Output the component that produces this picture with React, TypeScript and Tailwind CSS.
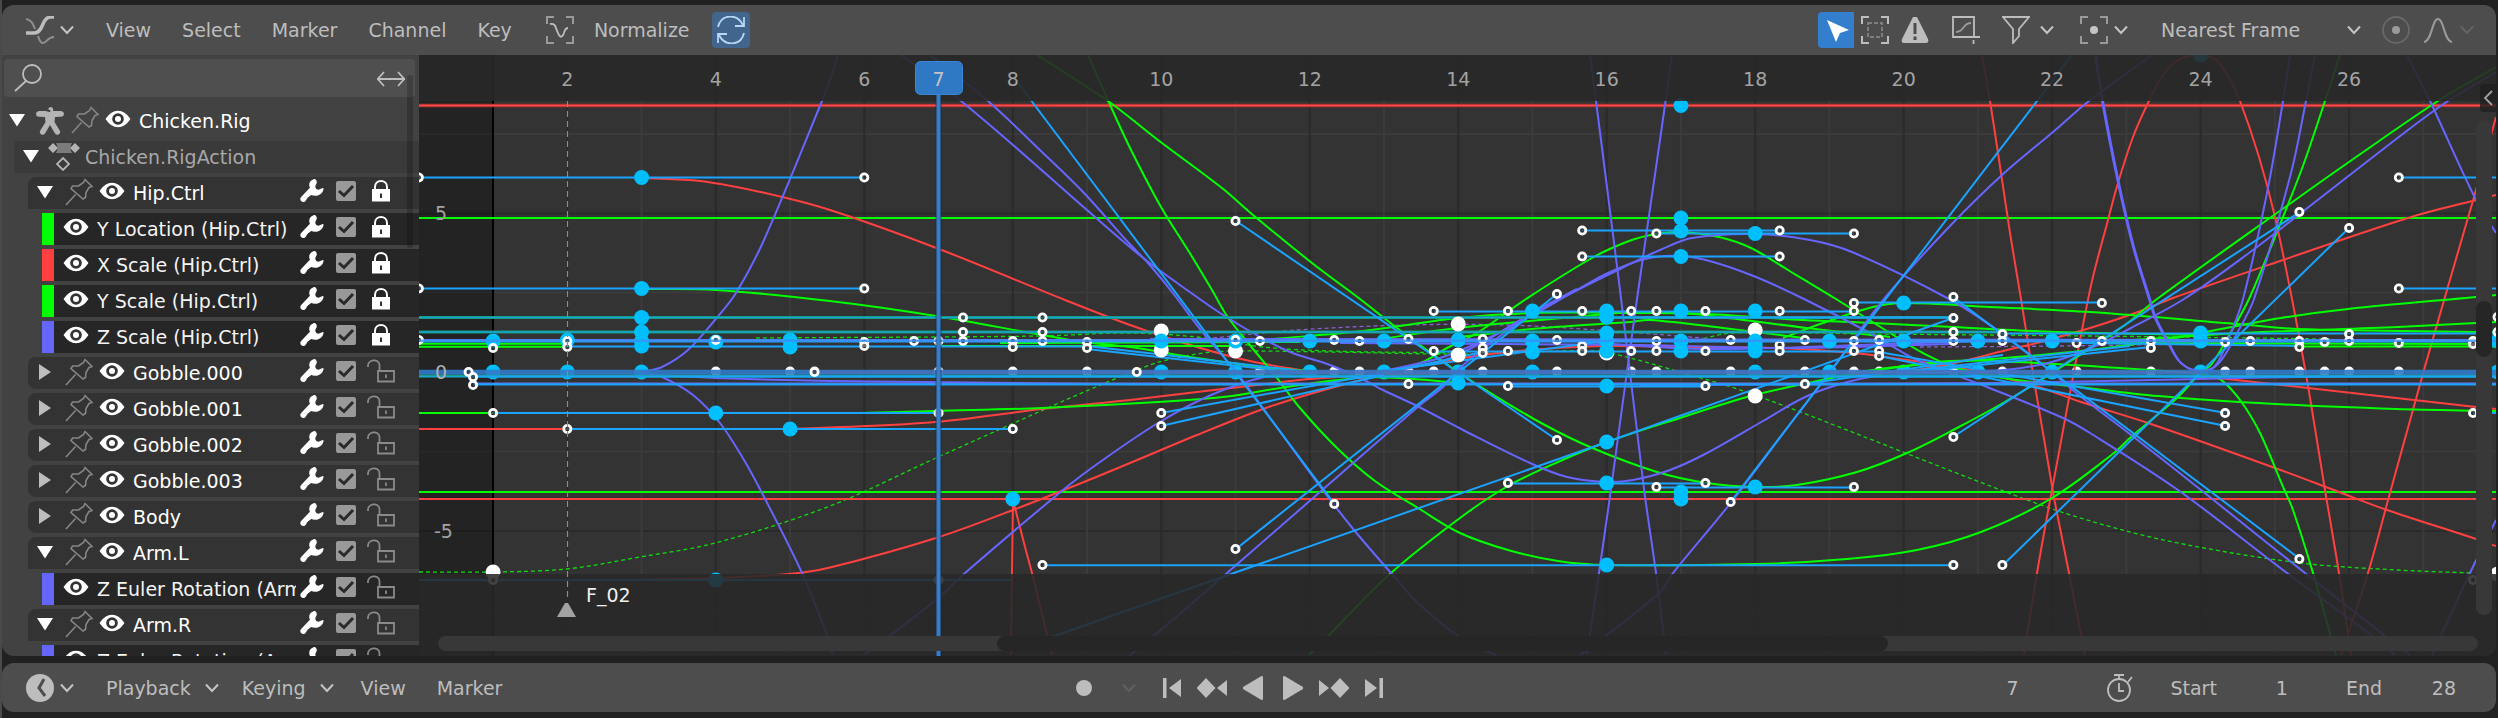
import React, { useState } from "react";

type Point = [number, number];

/* ---------- icons ---------- */

function Chevron({ className = "text-[#c4c4c4]" }: { className?: string }) {
  return (
    <svg viewBox="0 0 14 10" className={`h-[10px] w-[14px] shrink-0 ${className}`} fill="none" stroke="currentColor" strokeWidth="2">
      <path d="M1 1.5 7 8l6-6.5" />
    </svg>
  );
}

function Glyph({ children, className = "size-7" }: { children: React.ReactNode; className?: string }) {
  return (
    <svg viewBox="0 0 28 28" className={`shrink-0 ${className}`} fill="none" stroke="currentColor" strokeWidth="2">
      {children}
    </svg>
  );
}

function Corners() {
  return <path d="M1 8V1h7M20 1h7v7M27 20v7h-7M8 27H1v-7" />;
}

function GraphEditorIcon() {
  return (
    <Glyph>
      <path d="M0 17h8c5 0 7-4 9-9s4-7 8-7h3" strokeWidth="3.400" />
      <path d="M0 3c6 1 7 5 9 10M12 20c1 3 2 7 5 7 4 0 4-6 11-6" stroke="#8f8f8f" />
    </Glyph>
  );
}

function Eye() {
  return (
    <svg viewBox="0 0 26 18" className="h-[18px] w-[26px]" fill="none">
      <path d="M1.500 9C5.500 3 9.500 1.500 13 1.500S20.500 3 24.500 9C20.500 15 16.500 16.500 13 16.500S5.500 15 1.500 9Z" fill="#fff" stroke="#fff" strokeWidth="1.500" />
      <circle cx="13" cy="9" r="5.800" fill="#333" />
      <circle cx="13" cy="9" r="3" fill="#fff" />
    </svg>
  );
}

function Pin() {
  return (
    <Glyph className="size-7 text-[#858585]">
      <path d="M20 1.500 27 8.500 24 9.500 21 14.500 20.500 19.500 18 21 6 10.500 7.500 8 13.500 8 18.500 4.500ZM10.500 16.500 1 27" strokeWidth="1.600" />
    </Glyph>
  );
}

function Wrench() {
  return (
    <svg viewBox="0 0 24 24" className="size-6" fill="#fff">
      <path d="M13.500.2c-4 1.300-5.200 5.200-3.600 8.600L.9 18.200c-1.700 2.500.4 5.600 3.400 4.700 2-.8 2.200-3.400 3.900-4.600l3-2.200c4.800 1.700 10.600.2 12.200-5.400.7-2.100-.7-2.200-2-1.200-1.500 1-3.100 1.700-4.600.8-1.600-1.100-2-3.100-.8-4.800.7-1.100 1.200-2 .5-3.500-.4-1.500-1.500-2.200-3-1.800Z" />
    </svg>
  );
}

function Lock({ locked }: { locked: boolean }) {
  return locked ? (
    <svg viewBox="0 0 28 24" className="h-6 w-7" fill="none">
      <path d="M8 11V8c0-8 12-8 12 0v3" stroke="#fff" strokeWidth="2" />
      <path d="M5 10h18v12.500H5z" fill="#fff" />
      <path d="M13 14.500h2v4.500h-2z" fill="#333" />
    </svg>
  ) : (
    <svg viewBox="0 0 28 24" className="h-6 w-7" fill="none" stroke="#8a8a8a" strokeWidth="1.800">
      <path d="M1 8C0 0 12-1 12.500 6v5M11 12h16v10.500H11zM19 15.500v3.500" />
    </svg>
  );
}

function Armature() {
  return (
    <svg viewBox="0 0 28 28" className="size-7 shrink-0" fill="#b4b4b4">
      <path d="M14 0c3 0 3.500 2 3 4h7.500C29 4 29 9.500 25 9.800L19 10l-.5 5L24 24c1 3.500-3 5-5 2.500L14 18l-5 8.500C7 29 3 27.500 4 24l5.500-9L9 10l-6-.2C-1 9.500-1 4 3.500 4H10c1 0 3 2 5 0l-3-2Z" />
    </svg>
  );
}

function ActionIcon() {
  return (
    <svg viewBox="0 0 32 28" className="h-7 w-8 shrink-0">
      <path d="M8 0h16c-2 3-2 7 0 10H8c2-3 2-7 0-10Z" fill="#7c7c7c" />
      <path d="M5 0l5 5-5 5-5-5ZM27 0l5 5-5 5-5-5Z" fill="#b4b4b4" />
      <path d="M15 15l6 6-6 6-6-6Z" fill="none" stroke="#b4b4b4" strokeWidth="1.800" />
    </svg>
  );
}

function Disclosure({ open }: { open: boolean }) {
  return (
    <svg viewBox="0 0 16 16" className="size-4">
      {open ? <path d="M0 2h16L8 14.500Z" fill="#fff" /> : <path d="M2 0 14 8 2 16Z" fill="#bdbdbd" />}
    </svg>
  );
}

/* ---------- channel list ---------- */

function RowTools({ locked, name }: { locked: boolean; name: string }) {
  const [isLocked, setLocked] = useState(locked);
  return (
    <div className="mr-6 -mt-1 flex shrink-0 items-center">
      <button aria-label={`Modifiers of ${name}`} className="mr-3"><Wrench /></button>
      <label className="mr-[11px] grid size-5">
        <input type="checkbox" defaultChecked aria-label={`Enable ${name}`} className="peer size-5 appearance-none rounded-[2px] bg-[#999] [grid-area:1/1]" />
        <svg viewBox="0 0 20 20" className="pointer-events-none hidden size-5 [grid-area:1/1] peer-checked:block" fill="none" stroke="#2a2a2a" strokeWidth="3">
          <path d="M3 10l5 4.500L17 5" />
        </svg>
      </label>
      <button aria-label={`Lock ${name}`} onClick={() => setLocked(!isLocked)}><Lock locked={isLocked} /></button>
    </div>
  );
}

function GroupRow({ name, open = false, locked = false }: { name: string; open?: boolean; locked?: boolean }) {
  return (
    <li className={`ml-[26px] flex h-8 shrink-0 items-center bg-[#333] pl-[9px] ${open ? "rounded-tl-lg" : "rounded-l-lg"}`}>
      <button aria-label={`Expand ${name}`} className="mr-3 -mt-0.5"><Disclosure open={open} /></button>
      <button aria-label={`Pin ${name}`} className="mr-1.5 -mt-0.5"><Pin /></button>
      <button aria-label={`Show ${name}`} className="mr-2 -mt-1"><Eye /></button>
      <span className="min-w-0 flex-1 overflow-hidden whitespace-nowrap text-white">{name}</span>
      <RowTools locked={locked} name={name} />
    </li>
  );
}

function CurveRow({ name, stripe, locked = true }: { name: string; stripe: string; locked?: boolean }) {
  return (
    <li className="ml-10 flex h-8 shrink-0 items-center bg-[#262626]">
      <span className={`mr-[9px] h-8 w-3 shrink-0 ${stripe}`} />
      <button aria-label={`Show ${name}`} className="mr-2 -mt-1 shrink-0"><Eye /></button>
      <span className="mr-1 min-w-0 flex-1 overflow-hidden whitespace-nowrap text-[#f4f4f4]">{name}</span>
      <RowTools locked={locked} name={name} />
    </li>
  );
}

function ChannelList() {
  return (
    <aside className="relative flex w-[417px] shrink-0 flex-col overflow-hidden rounded-bl-xl bg-[#424242]">
      <label className="mt-1 mr-1 ml-[2px] flex h-[38px] shrink-0 items-center rounded bg-[#4f4f4f] pr-[10px] pl-[10px] text-[#bdbdbd]">
        <Glyph><circle cx="18" cy="10" r="9" strokeWidth="1.800" /><path d="M12 17 1 27" strokeWidth="1.800" /></Glyph>
        <input type="search" aria-label="Filter channels" className="min-w-0 flex-1 bg-transparent px-2 outline-none" />
        <Glyph><path d="M0 15h28M7 8 .8 15 7 22M21 8l6.200 7L21 22" strokeWidth="1.800" /></Glyph>
      </label>
      <ul className="mt-2 flex flex-col gap-1">
        <li className="flex h-8 shrink-0 items-center pl-[7px]">
          <button aria-label="Collapse Chicken.Rig" className="mr-[11px] -mt-0.5"><Disclosure open /></button>
          <Armature />
          <button aria-label="Pin Chicken.Rig" className="mr-1.5 ml-[7px] -mt-0.5"><Pin /></button>
          <button aria-label="Show Chicken.Rig" className="mr-2 -mt-1"><Eye /></button>
          <span className="text-white">Chicken.Rig</span>
        </li>
        <li className="ml-3 flex h-8 shrink-0 items-center bg-[#3a3a3a] pl-[9px]">
          <button aria-label="Collapse Chicken.RigAction" className="mr-[9px] -mt-0.5"><Disclosure open /></button>
          <ActionIcon />
          <span className="ml-[5px] text-[#a8a8a8]">Chicken.RigAction</span>
        </li>
        <GroupRow name="Hip.Ctrl" open locked />
        <CurveRow name="Y Location (Hip.Ctrl)" stripe="bg-[#00ff00]" />
        <CurveRow name="X Scale (Hip.Ctrl)" stripe="bg-[#ff4040]" />
        <CurveRow name="Y Scale (Hip.Ctrl)" stripe="bg-[#00ff00]" />
        <CurveRow name="Z Scale (Hip.Ctrl)" stripe="bg-[#6666ff]" />
        <GroupRow name="Gobble.000" />
        <GroupRow name="Gobble.001" />
        <GroupRow name="Gobble.002" />
        <GroupRow name="Gobble.003" />
        <GroupRow name="Body" />
        <GroupRow name="Arm.L" open />
        <CurveRow name="Z Euler Rotation (Arm.L)" stripe="bg-[#6666ff]" locked={false} />
        <GroupRow name="Arm.R" open />
        <CurveRow name="Z Euler Rotation (Arm.R)" stripe="bg-[#6666ff]" locked={false} />
      </ul>
      <span className="absolute top-5 right-1.5 h-[173px] w-1.5 rounded-full bg-black/20" />
    </aside>
  );
}

/* ---------- graph ---------- */

const frameX = (f: number) => 1606.7 + (f - 16) * 74.24;

/* Smooth path whose tangents are scaled by segment length, so uneven spacing does not overshoot. */
function smooth(points: Point[]): string {
  const dir = points.map((_, i) => {
    const a = points[Math.max(0, i - 1)];
    const b = points[Math.min(points.length - 1, i + 1)];
    const len = Math.hypot(b[0] - a[0], b[1] - a[1]) || 1;
    return [(b[0] - a[0]) / len, (b[1] - a[1]) / len];
  });
  let d = `M${points[0][0]} ${points[0][1]}`;
  for (let i = 1; i < points.length; i++) {
    const [x0, y0] = points[i - 1];
    const [x1, y1] = points[i];
    const s = Math.hypot(x1 - x0, y1 - y0) / 3;
    d += `C${(x0 + dir[i - 1][0] * s).toFixed(1)} ${(y0 + dir[i - 1][1] * s).toFixed(1)} ${(x1 - dir[i][0] * s).toFixed(1)} ${(y1 - dir[i][1] * s).toFixed(1)} ${x1} ${y1}`;
  }
  return d;
}

const redCurves: Point[][] = [
  [[642, 178], [700, 181], [765, 193], [830, 210], [939, 249], [1065, 300], [1130, 325], [1197, 347], [1250, 361], [1310, 372]],
  [[790, 429], [830, 427.5], [936, 422], [1042, 409], [1130, 400], [1197, 392], [1257, 385], [1310, 379], [1377, 375], [1440, 373]],
  [[419, 580], [600, 580], [716, 578], [789, 574], [830, 567.5], [936, 538], [1013, 510], [1084, 482], [1130, 463], [1197, 435], [1263, 409], [1310, 394], [1357, 381], [1400, 370], [1440, 362], [1490, 354], [1543, 349], [1607, 346], [1700, 347], [1780, 348], [1854, 353], [1900, 359], [1960, 368], [2035, 386], [2081, 402], [2148, 423], [2275, 468], [2339, 492], [2387, 510], [2476, 539], [2496, 546]],
  [[1854, 374], [1900, 372], [1950, 364], [2007, 350], [2037, 343], [2090, 328], [2138, 312], [2173, 298], [2283, 260], [2408, 218], [2476, 200], [2496, 195]],
  [[2200, 376], [2308, 388], [2476, 407], [2496, 409]],
  [[1982, 55], [1990, 101], [1998, 153], [2010, 233], [2021, 299], [2035, 386], [2051, 480], [2055, 503], [2069, 573], [2085, 655]],
  [[2024, 655], [2037, 573], [2052, 490], [2090, 290], [2108, 220], [2118, 183], [2133, 137], [2149, 101], [2165, 72], [2182, 58], [2201, 55], [2216, 60], [2229, 78], [2240, 101], [2259, 157], [2275, 217], [2292, 299], [2307, 380], [2325, 490], [2339, 573], [2351, 655]],
  [[2341, 655], [2368, 573], [2390, 493], [2424, 370], [2447, 290], [2476, 190], [2496, 117]],
  [[1013, 500], [1012, 573], [1011, 655]],
  [[1013, 500], [1025, 547], [1032, 573], [1052, 655]],
];

const greenCurves: Point[][] = [
  [[642, 289], [716, 290], [830, 301], [936, 316], [1042, 335], [1084, 342], [1130, 347], [1197, 358], [1263, 367], [1310, 371]],
  [[1034, 53], [1108, 101], [1158, 140], [1222, 188], [1253, 215], [1312, 263], [1360, 299], [1397, 328], [1458, 372], [1497, 397], [1543, 424], [1590, 447], [1657, 472], [1707, 483], [1755, 487], [1797, 485], [1857, 472], [1907, 453], [1957, 428], [2003, 403], [2052, 373], [2125, 325], [2157, 299], [2291, 203], [2349, 162], [2438, 101], [2496, 67]],
  [[1088, 55], [1111, 107], [1132, 152], [1161, 207], [1191, 255], [1212, 290], [1227, 316], [1249, 344], [1277, 378], [1300, 408], [1337, 448], [1375, 481], [1418, 508], [1460, 533], [1508, 550], [1558, 561], [1607, 565], [1756, 564], [1847, 559], [1917, 550], [1981, 532], [2052, 498], [2114, 453], [2131, 437], [2178, 397], [2201, 372], [2211, 365], [2228, 337], [2249, 299], [2283, 217], [2304, 163], [2325, 101], [2340, 55]],
  [[1309, 655], [1329, 635], [1391, 573], [1460, 518], [1508, 486], [1558, 462], [1607, 442], [1680, 418], [1747, 397], [1803, 384], [1873, 370], [1940, 363], [2017, 357], [2090, 350], [2175, 338], [2205, 332], [2281, 318], [2348, 309], [2476, 297], [2496, 295]],
  [[1397, 370], [1423, 362], [1447, 348], [1477, 333], [1526, 299], [1592, 258], [1629, 241], [1656, 234], [1681, 232], [1719, 237], [1751, 248], [1788, 270], [1836, 299], [1890, 333], [1923, 353], [1957, 368], [2010, 379], [2071, 386], [2158, 396], [2275, 404], [2396, 409], [2496, 411]],
  [[860, 413], [936, 411], [1042, 408], [1158, 402], [1232, 396], [1280, 388], [1357, 378], [1400, 378], [1458, 383]],
  [[1273, 339], [1363, 331], [1458, 318], [1530, 313], [1640, 313], [1707, 314], [1803, 320], [1873, 323], [1953, 327], [2057, 332], [2200, 335]],
  [[1380, 339], [1458, 328], [1563, 318], [1630, 312]],
  [[1458, 337], [1543, 328], [1630, 322], [1650, 320], [1723, 328], [1803, 338]],
  [[1660, 312], [1703, 315], [1807, 328], [1890, 337]],
  [[1783, 338], [1823, 323], [1873, 307], [1904, 303], [1990, 307], [2090, 312], [2238, 324], [2298, 329], [2476, 332], [2496, 332]],
  [[2120, 341], [2241, 333], [2398, 327], [2476, 323], [2496, 322]],
  [[1870, 371], [1950, 361], [2017, 362], [2120, 368], [2200, 374], [2218, 378], [2231, 389], [2245, 407], [2261, 435], [2284, 489], [2293, 510], [2313, 573], [2336, 655]],
  [[1000, 343], [1300, 342]],
  [[940, 346], [1230, 346]],
  [[2080, 343], [2496, 344]],
  [[2300, 346.500], [2496, 346.500]],
];

const blueCurves: Point[][] = [
  [[642, 372], [662, 367], [688, 350], [715, 320], [736, 293], [764, 240], [822, 101], [830, 80], [838, 55]],
  [[642, 372], [662, 377], [693, 395], [720, 423], [744, 460], [762, 493], [802, 573], [827, 635], [833, 655]],
  [[899, 53], [961, 101], [1013, 145], [1095, 217], [1142, 257], [1187, 290], [1220, 313], [1260, 337], [1290, 352], [1330, 365], [1360, 378], [1383, 390], [1417, 406], [1463, 430], [1530, 463], [1567, 477], [1607, 482], [1633, 480], [1670, 470], [1707, 453], [1763, 421], [1803, 398], [1837, 385], [1877, 376], [1960, 372], [2003, 370], [2048, 363], [2091, 348], [2131, 328], [2184, 299], [2253, 250], [2301, 213], [2408, 130], [2448, 101], [2496, 72]],
  [[930, 55], [988, 101], [1042, 152], [1084, 193], [1126, 240], [1148, 263], [1172, 292], [1200, 329], [1237, 373], [1263, 408], [1322, 489], [1354, 530], [1391, 573], [1418, 603], [1458, 636], [1497, 656]],
  [[864, 655], [936, 600], [965, 573], [1063, 490], [1100, 462], [1158, 423], [1211, 395], [1264, 377], [1309, 372]],
  [[1129, 656], [1155, 635], [1227, 573], [1420, 405], [1443, 387], [1462, 366], [1517, 324], [1560, 299], [1624, 267], [1660, 250], [1692, 238], [1755, 234], [1810, 240], [1852, 252], [1949, 299], [2000, 332], [2052, 372], [2075, 392], [2135, 438], [2201, 490], [2305, 573], [2384, 635], [2410, 655]],
  [[1384, 371], [1440, 358], [1480, 342], [1520, 322], [1577, 290], [1608, 273], [1645, 259], [1681, 256], [1713, 262], [1756, 277], [1804, 299], [1870, 333], [1917, 360], [1987, 387], [2063, 418], [2090, 433], [2178, 490], [2287, 573], [2371, 635], [2395, 655]],
  [[1384, 372], [1445, 360], [1490, 338], [1530, 314], [1577, 289]],
  [[1590, 55], [1596, 101], [1620, 290], [1644, 489], [1656, 573], [1666, 655]],
  [[1672, 55], [1660, 140], [1637, 299], [1611, 489], [1599, 573], [1587, 655]],
  [[1580, 655], [1607, 635], [1660, 592], [1673, 573], [1729, 505], [1788, 427], [1830, 372], [1884, 299], [1949, 227], [2002, 175], [2053, 132], [2089, 101], [2152, 55]],
  [[2095, 55], [2102, 101], [2118, 183], [2133, 247], [2149, 299], [2155, 318], [2168, 343], [2181, 363], [2201, 372], [2215, 366], [2228, 340], [2243, 299], [2267, 193], [2283, 101], [2290, 55]],
  [[2096, 55], [2103, 101], [2119, 183], [2134, 247], [2150, 299], [2156, 318], [2169, 343], [2182, 364], [2201, 371], [2218, 364], [2236, 335], [2254, 299], [2291, 173], [2306, 101], [2315, 55]],
  [[2407, 55], [2430, 101], [2476, 200], [2496, 233]],
  [[2432, 655], [2470, 573], [2496, 520]],
  [[642, 374], [715, 378], [830, 381], [1100, 384], [1260, 384]],
  [[1640, 385], [1998, 383], [2200, 379], [2298, 377], [2496, 375]],
  [[1340, 343], [1500, 344], [1640, 345], [1800, 348], [1950, 344]],
  [[1560, 340], [1700, 349], [1860, 345], [1980, 341]],
  [[1150, 339], [2300, 340]],
];

const dashedGreen: Point[][] = [
  [[419, 572], [493, 572], [566, 569], [640, 557], [715, 543], [830, 506], [936, 458], [1005, 427], [1084, 392], [1142, 368], [1163, 361], [1203, 353], [1237, 351], [1330, 352], [1458, 354], [1597, 351], [1630, 358], [1673, 370], [1755, 395], [1998, 489], [2077, 517], [2173, 542], [2301, 563], [2398, 570], [2473, 573]],
  [[756, 338], [1042, 336], [1126, 333], [1197, 337], [1263, 347], [1330, 351], [1463, 353]],
  [[1690, 342], [1733, 333], [1870, 334], [2090, 336], [2250, 338], [2330, 339]],
];

const dashedBlue: Point[][] = [
  [[1213, 338], [1297, 330], [1407, 325], [1507, 325], [1597, 330], [1703, 338]],
  [[1920, 347], [2060, 346], [2200, 344]],
];

/* Handle lines: x1, y1, x2, y2 */
const handles: [number, number, number, number][] = [
  [419, 177.500, 864, 177.500], [419, 288.500, 864, 288.500], [493, 413, 938, 413], [567, 429, 1013, 429],
  [567, 346.500, 1087, 346.500], [1043, 565.300, 1953, 565.300], [473, 384.500, 2496, 384.500], [468, 376.500, 2496, 376.500],
  [419, 341.500, 2496, 341.500], [1018, 83, 1334.500, 504], [1236, 221, 1557, 440], [1236, 549, 1557, 294],
  [1043, 640, 1607, 442], [1607, 442, 1953, 318], [1161, 413, 1384, 373], [1161, 426, 1384, 375], [1384, 373, 1483, 352],
  [1384, 371, 1606, 341], [1087, 346, 1310, 372], [1087, 349, 1310, 374], [1730.500, 502, 2034, 105], [2034, 105, 2072, 55],
  [1953, 437, 2052, 372], [2052, 372, 2300, 212], [2003, 565, 2200, 373], [2200, 373, 2349, 228], [1953, 297, 2300, 559],
  [1879, 352, 2226, 413], [1879, 356, 2226, 426], [1904, 373, 2151, 347], [1805, 384, 2003, 355], [1900, 372, 2130, 346],
  [1434, 311.500, 1854, 311.500], [1582, 230.500, 1780, 230.500], [1656, 233.500, 1854, 233.500], [1582, 256.500, 1780, 256.500],
  [1508, 483.500, 1706, 483.500], [1657, 487.500, 1854, 487.500], [1854, 302.500, 2102, 302.500], [2399, 177.500, 2496, 177.500],
  [2399, 288.500, 2496, 288.500], [1434, 351.500, 1879, 351.500], [1508, 386.500, 1706, 386.500], [2003, 333.500, 2496, 333.500],
  [2473, 413, 2496, 413], [1600, 317.500, 1953, 317.500], [2080, 343, 2300, 346], [419, 580, 1011, 580],
];

/* White rings at handle ends: frame, y values */
const rings: [number, number[]][] = [
  [0, [177.500, 288.500, 340]], [0.67, [372]], [0.73, [377, 385]], [1, [348, 413, 580]], [2, [341, 347, 429]], [4, [340]], [5.33, [372]],
  [6, [177.500, 288.500, 342, 346]], [6.67, [341]], [7, [341, 413, 580]], [7.33, [317.500, 332, 341]], [8, [341, 347, 429]],
  [8.4, [317.500, 332, 341, 565]], [9, [342, 348]], [9.67, [372]], [10, [413, 426]], [11, [221, 549, 340]], [11.33, [341]],
  [12.33, [340, 504]], [12.67, [341]], [13.33, [339, 384]], [13.67, [311, 351]], [14.33, [339, 348, 353]], [14.67, [311, 351, 386, 483]],
  [15.33, [294, 340, 440]], [15.67, [230.500, 256.500, 311, 346, 351]], [16.33, [311, 351]], [16.67, [233.500, 311, 341, 351, 487]],
  [17.33, [311, 351, 386, 483]], [17.67, [340, 502]], [18.33, [230.500, 256.500, 311, 345, 351]], [18.67, [340, 384]],
  [19.33, [233.500, 303, 311, 341, 351, 487]], [19.67, [340, 351, 356]], [20.67, [297, 318, 332, 341, 437, 565]], [21.33, [334, 341, 565]],
  [22.33, [343]], [22.67, [303, 341]], [23.33, [341, 348]], [24.33, [342, 413, 426]], [24.67, [341]], [25.33, [212, 341, 347, 559]],
  [25.67, [342]], [26, [228, 334, 341]], [26.67, [177.500, 288.500, 343]], [27.67, [341, 344, 413, 580]], [28, [317, 332]],
];

const whiteZero = [4, 5, 5.33, 7, 8, 9, 11.33, 12.33, 12.67, 13.33, 13.67, 14.33, 15.33, 16.33, 16.67, 17.67, 18.67, 19.33, 19.67, 20.67, 21.33, 22.33, 23.33, 24.33, 24.67, 25.33, 25.67, 26, 26.67];
const blueZero = [1, 2, 3, 10, 11, 12, 13, 14, 15, 18, 19, 20, 21, 22, 24, 28];

const whiteKeys: Point[] = [[1, 572], [10, 331], [10, 350], [11, 351], [14, 324], [14, 355], [16, 353], [18, 330], [18, 396], [28, 574]];

const keys: [number, number[]][] = [
  [1, [341]], [2, [340]], [3, [177.500, 288.500, 317.500, 332, 341, 346]], [4, [342, 413, 580]], [5, [340, 347, 429]],
  [8, [499]], [10, [341]], [11, [341]], [12, [341]], [13, [341]], [14, [340, 383]], [15, [311, 341, 352]],
  [16, [311, 317, 333, 341, 351, 386, 442, 483, 565]], [17, [105.500, 218, 231, 256.500, 311, 341, 351, 492, 499]],
  [18, [233.500, 311, 341, 345, 351, 487]], [19, [341]], [20, [303, 341]], [21, [341]], [22, [341]], [24, [333, 341, 55]], [28, [341]],
];

const labelFrames = [2, 4, 6, 8, 10, 12, 14, 16, 18, 20, 22, 24, 26];
const gridFrames = Array.from({ length: 27 }, (_, i) => i + 1);

function Curves({ list, color, dashed = false }: { list: Point[][]; color: string; dashed?: boolean }) {
  return (
    <g fill="none" stroke={color} strokeWidth={dashed ? 1.3 : 2} strokeDasharray={dashed ? "4 3" : undefined}>
      {list.map((pts, i) => <path key={i} d={smooth(pts)} />)}
    </g>
  );
}

function Graph() {
  return (
    <section aria-label="Animation curves" className="relative min-w-0 flex-1 overflow-hidden rounded-br-xl bg-[#333]">
      <svg viewBox="419 55 2077 601" preserveAspectRatio="xMinYMin slice" className="h-full w-full">
        <rect x="419" y="55" width="2077" height="601" fill="#333" />
        {[134, 292.5, 451.5, 610].map((y) => <path key={y} d={`M419 ${y}H2496`} stroke="#3b3b3b" strokeWidth="2" />)}
        {[213.5, 372, 531].map((y) => <path key={y} d={`M419 ${y}H2496`} stroke="#2a2a2a" strokeWidth="2" />)}
        {gridFrames.map((f) => <path key={f} d={`M${frameX(f)} 55V656`} stroke={f % 2 ? "#3b3b3b" : "#2a2a2a"} strokeWidth="2" />)}
        <rect x="419" y="55" width="74" height="601" fill="#000" fillOpacity="0.3" />
        <path d="M493 55V656" stroke="#000" strokeWidth="2" />

        {whiteZero.map((f, i) => <circle key={i} cx={frameX(f)} cy="371.500" r="5" fill="#fff" />)}
        {blueZero.map((f) => <circle key={f} cx={frameX(f)} cy="372" r="7.500" fill="#00bfff" />)}

        <Curves list={dashedGreen} color="#0fdc0f" dashed />
        <Curves list={dashedBlue} color="#8a5fd0" dashed />
        <path d="M419 105.500H2496" stroke="#a33" strokeWidth="3.400" />
        <path d="M419 105.500H2496" stroke="#ff4a4a" strokeWidth="1.400" />
        <path d="M419 499H2496M419 429H567" stroke="#ff4040" strokeWidth="2" />
        <path d="M419 218H2496M419 492H2496M419 413H493M419 343.800H567M419 346.800H567" stroke="#0f0" strokeWidth="2" />
        <Curves list={redCurves} color="#ff4040" />
        <Curves list={greenCurves} color="#00ff00" />
        <Curves list={blueCurves} color="#6666ff" />
        <path d="M419 317.500H1953M419 332H2003M419 376H2496" stroke="#159a6c" strokeWidth="3" />
        <path d="M419 317.500H1953M419 332H2003M419 376.500H2496" stroke="#1aa3d8" strokeWidth="1.600" />
        <path d="M419 340H2496M473 383.500H2496" stroke="#5a78e8" strokeWidth="2" />
        <g stroke="#1aa3ff" strokeWidth="2">
          {handles.map(([x1, y1, x2, y2], i) => <path key={i} d={`M${x1} ${y1}L${x2} ${y2}`} />)}
        </g>
        <path d="M419 372.300H2496" stroke="#3279c8" strokeWidth="5" strokeOpacity="0.92" />
        <path d="M820 372.300H2200" stroke="#5a6cb8" strokeWidth="3" strokeOpacity="0.5" />

        {whiteKeys.map(([f, y], i) => <circle key={i} cx={frameX(f)} cy={y} r="7.500" fill="#fff" />)}
        {keys.map(([f, ys]) => ys.map((y) => <circle key={`${f}-${y}`} cx={frameX(f)} cy={y} r="7.500" fill="#00bfff" />))}
        {rings.map(([f, ys], i) => ys.map((y) => <circle key={`${i}-${y}`} cx={frameX(f)} cy={y} r="3.600" fill="#333" fillOpacity="0.7" stroke="#fff" strokeWidth="2.800" />))}
        <path d="M419 340.700H560M575 340.700H2496" stroke="#3a90f4" strokeWidth="2.400" strokeOpacity="0.8" />

        <rect x="419" y="55" width="2077" height="46" fill="#282828" fillOpacity="0.9" />
        <rect x="419" y="574" width="2077" height="82" fill="#282828" fillOpacity="0.88" />

        <path d="M567.500 101V601" stroke="#8c8c8c" strokeWidth="1.200" strokeDasharray="6 4" />
        <path d="M557 617h19l-8-14h-3Z" fill="#a3a3a3" />
        <g fontFamily="DejaVu Sans, sans-serif" fontSize="19">
          <text x="586" y="602" fill="#f0f0f0">F_02</text>
          <g fill="#a3a3a3">
            <text x="435" y="220">5</text>
            <text x="435" y="379" fill="#b0b0b0">0</text>
            <text x="434" y="538">-5</text>
            {labelFrames.map((f) => <text key={f} x={frameX(f)} y="86" textAnchor="middle">{f}</text>)}
          </g>
          <path d="M938.500 90V656" stroke="#1c2a3a" strokeWidth="6" strokeOpacity="0.6" />
          <path d="M938.500 90V656" stroke="#347fcd" strokeWidth="4" />
          <rect x="915.500" y="61.500" width="47" height="33" rx="5" fill="#2f78c4" stroke="#3b86d6" />
          <text x="938.500" y="86" textAnchor="middle" fill="#c4c4c4">7</text>
        </g>
      </svg>
      <div className="absolute top-[65px] right-1 bottom-[41px] w-4 rounded-lg bg-[#383838] pt-[181px]">
        <div className="h-14 rounded-lg bg-[#262626]" />
      </div>
      <div className="absolute right-[18px] bottom-[5px] left-[19px] flex h-[15px] rounded-lg bg-[#383838]">
        <div className="ml-[27.4%] w-[43.700%] rounded-lg bg-[#262626]" />
      </div>
      <button aria-label="Show sidebar" className="absolute top-[29px] right-0 flex h-7 w-4 items-center justify-center rounded-l bg-[#1f1f1f]/80 text-[#a0a0a0]">
        <svg viewBox="0 0 10 16" className="h-4 w-[10px]" fill="none" stroke="currentColor" strokeWidth="1.800"><path d="M9 1 2 8l7 7" /></svg>
      </button>
    </section>
  );
}

/* ---------- bars ---------- */

function Header() {
  return (
    <header className="flex h-[50px] shrink-0 items-center rounded-t-xl bg-[#4d4d4d] pr-[22px] pl-6 text-[#bdbdbd]">
      <button aria-label="Editor type" className="flex items-center gap-1.5"><GraphEditorIcon /><Chevron /></button>
      <nav className="ml-8 flex gap-[31px]">
        <button>View</button>
        <button>Select</button>
        <button>Marker</button>
        <button>Channel</button>
        <button>Key</button>
      </nav>
      <button className="ml-[34px] flex items-center gap-5">
        <span className="text-[#9a9a9a]"><Glyph><Corners /><path d="M4 8c6-1 5 3 8 9 2 5 4 5 6 0 1-3 1-5 4-5" stroke="#bdbdbd" strokeWidth="1.800" /></Glyph></span>
        Normalize
      </button>
      <button aria-label="Auto normalize" className="ml-[22px] flex h-9 w-[38px] items-center justify-center rounded bg-[#41658c] text-[#b9d6f5]">
        <Glyph><path d="M1 11C4-2 20-3 26 9M27 1v9h-9M27 17C24 30 8 31 2 19M1 27v-9h9" strokeWidth="1.800" /></Glyph>
      </button>

      <div className="ml-auto flex items-center">
        <button aria-label="Only selected" className="mr-[7px] flex size-9 items-center justify-center rounded-l bg-[#347fcd] text-white">
          <Glyph><path d="M5 4l22 10-9 3-4 9Z" fill="currentColor" stroke="none" /></Glyph>
        </button>
        <button aria-label="Only selected keyframes" className="mr-3"><Glyph><Corners /><path d="M7 7h14v14H7z" strokeWidth="1.500" strokeDasharray="4 2" stroke="#8f8f8f" /></Glyph></button>
        <button aria-label="Only errors" className="mr-[23px]">
          <Glyph><path d="M12 1h4l11 22c1 2 0 4-2 4H3c-2 0-3-2-2-4Z" fill="currentColor" stroke="none" /><path d="M14 7v11M14 20.500v3.500" stroke="#4d4d4d" strokeWidth="3" /></Glyph>
        </button>
        <button aria-label="Ghost curves" className="mr-[22px]"><Glyph><path d="M22 21V1H1v20h27M21.500 24v4" strokeWidth="1.800" /><path d="M4 16c9 0 6-9 15-9" strokeWidth="1.800" stroke="#9a9a9a" /></Glyph></button>
        <button aria-label="Filters" className="mr-[26px] flex items-center gap-[10px]"><Glyph><path d="M1 1h26L17 13v7l-6 7V13Z" strokeWidth="1.800" /></Glyph><Chevron /></button>
        <button aria-label="Pivot point" className="mr-[33px] flex items-center gap-1.5"><Glyph className="size-7 text-[#9a9a9a]"><Corners /><circle cx="14" cy="14" r="4" fill="#c4c4c4" stroke="none" /></Glyph><Chevron /></button>
        <label className="grid w-[200px] items-center">
          <select aria-label="Snapping" className="w-full appearance-none bg-transparent outline-none [grid-area:1/1]">
            <option>Nearest Frame</option>
          </select>
          <span className="pointer-events-none justify-self-end [grid-area:1/1]"><Chevron /></span>
        </label>
        <button aria-label="Proportional editing" className="ml-[21px]"><Glyph className="size-7 text-[#686868]"><circle cx="14" cy="14" r="13" strokeWidth="1.800" /><circle cx="14" cy="14" r="4" fill="#9a9a9a" stroke="none" /></Glyph></button>
        <button aria-label="Falloff" className="ml-[14px] flex items-center gap-2"><Glyph className="size-7 text-[#9a9a9a]"><path d="M0 26C8 25 8 3 14 3s6 22 14 23" /></Glyph><Chevron className="text-[#646464]" /></button>
      </div>
    </header>
  );
}

function Transport({ label, d, w, className }: { label: string; d: string; w: number; className: string }) {
  return (
    <button aria-label={label}>
      <svg viewBox={`0 0 ${w} 24`} className={`h-6 ${className}`} fill="#bdbdbd"><path d={d} /></svg>
    </button>
  );
}

function Timeline() {
  return (
    <footer className="grid h-[49px] shrink-0 grid-cols-[1fr_auto_1fr] items-center rounded-xl bg-[#4d4d4d] pr-10 pl-6 text-[#bdbdbd]">
      <div className="flex items-center">
        <button aria-label="Editor type" className="flex items-center gap-1.5">
          <Glyph><circle cx="14" cy="14" r="14" fill="currentColor" stroke="none" /><path d="M18 5l-5 9 6 8" stroke="#4d4d4d" strokeWidth="3" /></Glyph>
          <Chevron />
        </button>
        <nav className="ml-8 flex items-center">
          <button className="mr-[23px] flex items-center gap-[14px]">Playback<Chevron /></button>
          <button className="mr-[27px] flex items-center gap-[14px]">Keying<Chevron /></button>
          <button className="mr-[31px]">View</button>
          <button>Marker</button>
        </nav>
      </div>
      <div className="flex items-center pr-6">
        <button aria-label="Auto keying" className="mr-[30px] size-4 rounded-full bg-[#bdbdbd]" />
        <Chevron className="mr-[27px] text-[#606060]" />
        <div className="flex items-center gap-4">
          <Transport label="Jump to start" w={18} className="w-[18px]" d="M0 2h3.500v20H0ZM18 3v18L6 12Z" />
          <Transport label="Previous keyframe" w={30} className="w-[30px]" d="M9 2l9.500 10L9 22-.5 12ZM30 4v16l-10-8Z" />
          <Transport label="Play reversed" w={20} className="w-5" d="M18.500 0q1.500 0 1.500 1v22q0 1-1.500 1L0 13v-2Z" />
          <Transport label="Play" w={20} className="ml-1 w-5" d="M1.500 0Q0 0 0 1v22q0 1 1.500 1L20 13v-2Z" />
          <Transport label="Next keyframe" w={30} className="w-[30px]" d="M21 2l9.500 10L21 22l-9.500-10ZM0 4v16l10-8Z" />
          <Transport label="Jump to end" w={18} className="w-[18px]" d="M14.500 2H18v20h-3.500ZM0 3v18l12-9Z" />
        </div>
      </div>
      <div className="flex items-center justify-end">
        <input aria-label="Current frame" defaultValue="7" className="mr-[46px] w-24 bg-transparent text-center outline-none" />
        <button aria-label="Use preview range" className="mr-9">
          <Glyph><circle cx="13" cy="16" r="11" strokeWidth="1.800" /><path d="M13 9v8h5M13 5V1M8 1h10M22 8l4-5" strokeWidth="1.800" /></Glyph>
        </button>
        <label className="flex items-center">Start<input defaultValue="1" className="ml-[17px] w-24 bg-transparent text-center outline-none" /></label>
        <label className="ml-4 flex items-center">End<input defaultValue="28" className="ml-[14px] w-[60px] bg-transparent text-right outline-none" /></label>
      </div>
    </footer>
  );
}

export default function App() {
  return (
    <div className="flex h-screen flex-col border-l-2 border-[#4a4a4a] bg-[#212121] pt-[5px] pr-0.5 pb-1.5 font-['DejaVu_Sans',sans-serif] text-[19px] leading-6">
      <Header />
      <main className="flex min-h-0 flex-1">
        <ChannelList />
        <Graph />
      </main>
      <div className="h-[7px] shrink-0" />
      <Timeline />
    </div>
  );
}
